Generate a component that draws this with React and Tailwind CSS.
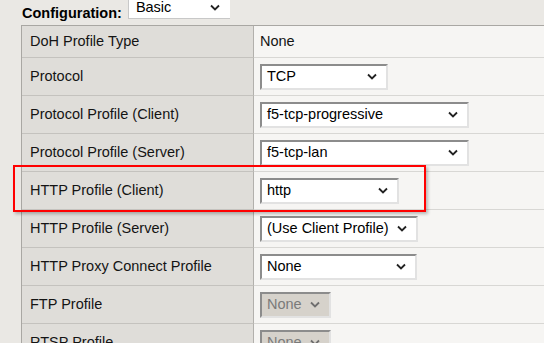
import * as React from "react";

const rows = [
  { label: "DoH Profile Type", text: "None" },
  { label: "Protocol", sel: "TCP", w: "w-[128px]" },
  { label: "Protocol Profile (Client)", sel: "f5-tcp-progressive", w: "w-[209px]" },
  { label: "Protocol Profile (Server)", sel: "f5-tcp-lan", w: "w-[209px]" },
  { label: "HTTP Profile (Client)", sel: "http", w: "w-[139px]" },
  { label: "HTTP Profile (Server)", sel: "(Use Client Profile)", w: "w-[158px]" },
  { label: "HTTP Proxy Connect Profile", sel: "None", w: "w-[157px]" },
  { label: "FTP Profile", sel: "None", w: "w-[71px]", off: true },
  { label: "RTSP Profile", sel: "None", w: "w-[71px]", off: true },
];

function Chev({ c = "#222" }) {
  return (
    <svg width="10" height="7" viewBox="0 0 10 7" className="shrink-0">
      <polyline points="1,1.5 5,5.5 9,1.5" fill="none" stroke={c} strokeWidth="1.8" />
    </svg>
  );
}

function Sel({ v, w, off }) {
  return (
    <div className={`${w} h-[26px] flex items-center justify-between pl-[5px] pr-[9px] border-2 border-t-[#8c8c8c] border-l-[#8c8c8c] border-b-[#e2e2e2] border-r-[#e2e2e2] ${off ? "bg-[#d6d2cb] text-[#7a7a7a]" : "bg-white text-black"}`}>
      <span className="leading-none">{v}</span>
      <Chev c={off ? "#6e6e6e" : "#222"} />
    </div>
  );
}

export default function App() {
  return (
    <div className="relative w-[544px] h-[343px] overflow-hidden bg-[#eae8e4] text-[14.5px] text-[#141414]" style={{ fontFamily: '"Liberation Sans", Arial, sans-serif' }}>
      <div className="h-[25px] flex items-start pl-[22px]">
        <span className="font-bold mt-[5px] leading-[16px] text-black">Configuration:</span>
        <div className="ml-[6px] -mt-[3px] w-[102px] h-[22px] bg-white border-l border-b border-[#c8c8c8] flex items-center justify-between pl-[7px] pr-[10px]">
          <span className="leading-none text-black">Basic</span>
          <Chev />
        </div>
      </div>
      <div className="ml-[21px] border-t border-l border-[#a9a7a3]">
        {rows.map((r, i) => (
          <div key={i} className={`flex ${i === 0 ? "h-[32px]" : "h-[38px]"}`}>
            <div className="w-[232px] flex items-center pl-[8px] bg-[#dfddd9] border-b border-[#c4c2be] border-r border-r-[#b2b0ac]">
              {r.label}
            </div>
            <div className="flex-1 flex items-center pl-[6px] bg-[#f6f5f3] border-b border-[#d8d7d4]">
              {r.text ? r.text : <Sel v={r.sel} w={r.w} off={r.off} />}
            </div>
          </div>
        ))}
      </div>
      <div className="absolute left-[13px] top-[165px] w-[413px] h-[47px] border-2 border-[#ff0000] shadow-[2px_2px_3px_rgba(0,0,0,0.25)]" />
    </div>
  );
}
